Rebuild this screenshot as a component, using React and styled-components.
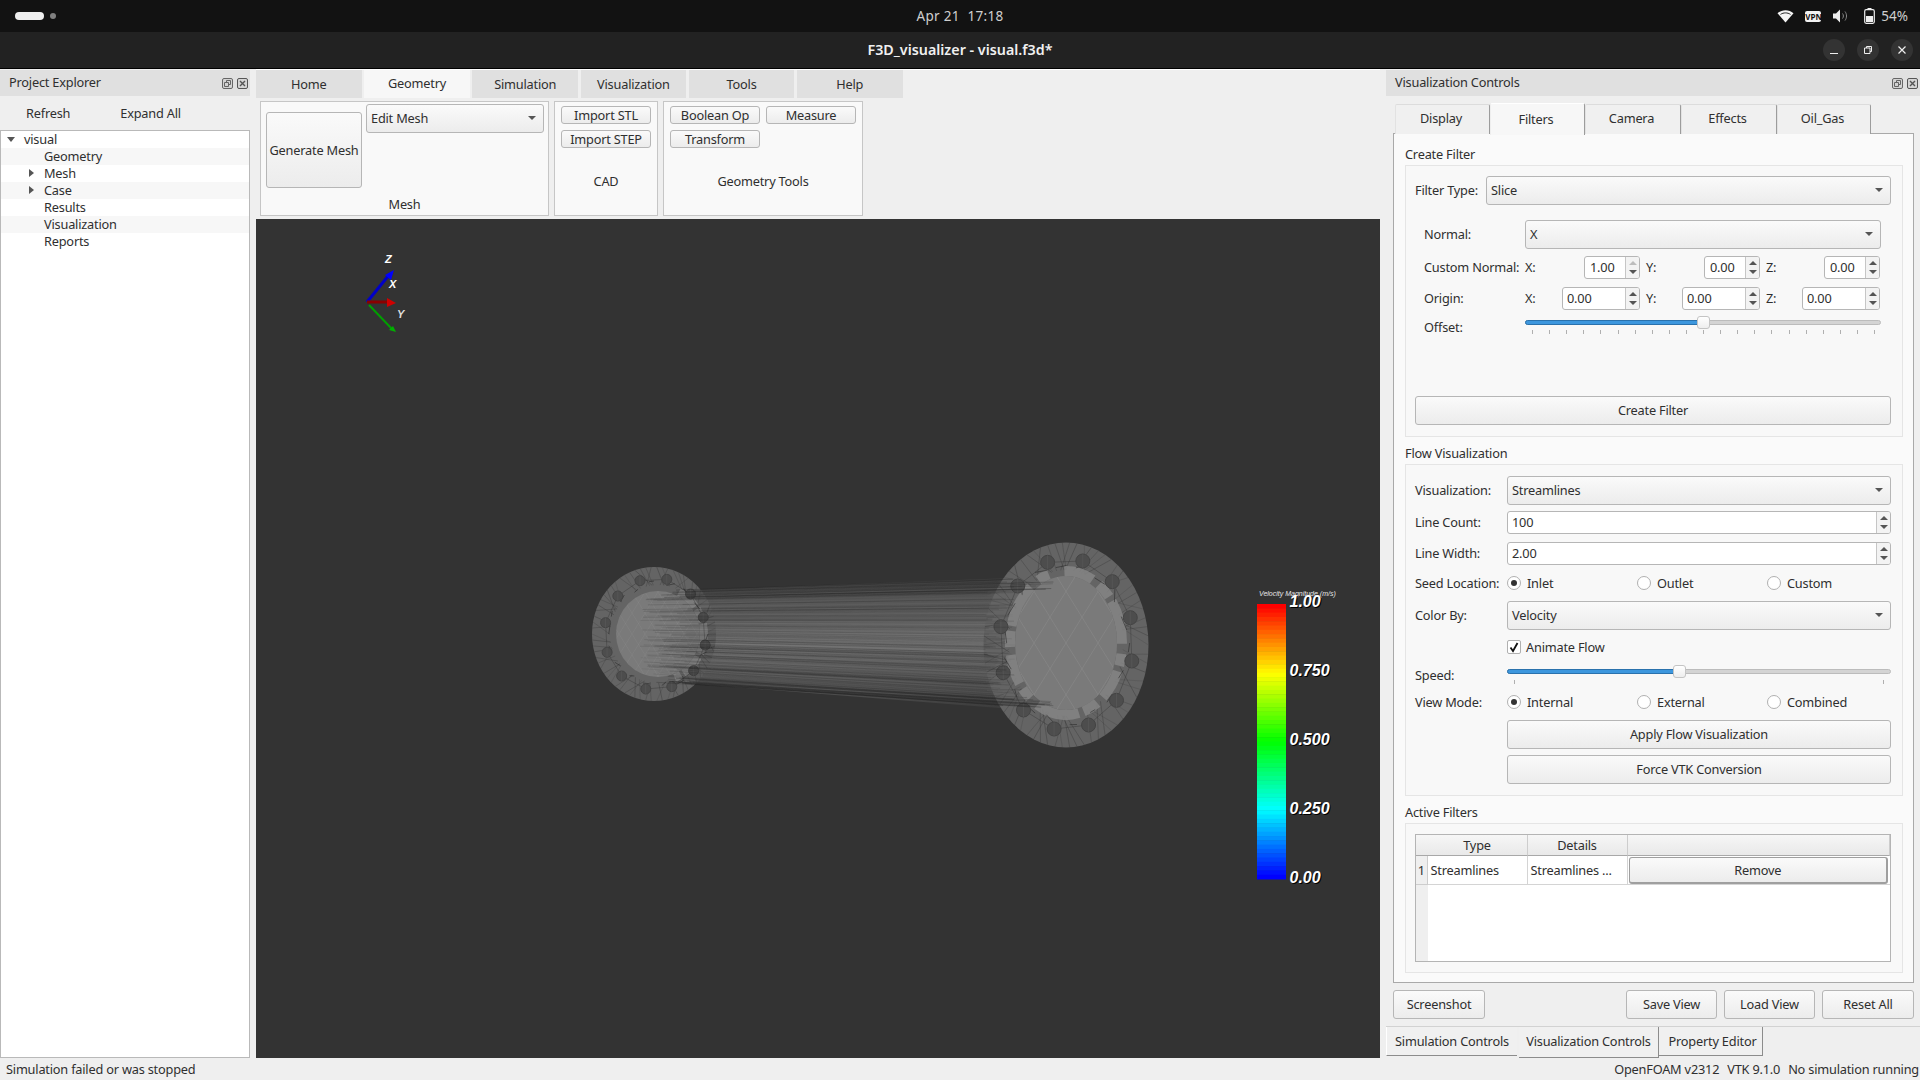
import React from "react";
import styled, { createGlobalStyle } from "styled-components";

const Global = createGlobalStyle`
  html, body { margin: 0; padding: 0; width: 1920px; height: 1080px; overflow: hidden; background: #efefef; }
  body { font-family: "Noto Sans", "Open Sans", sans-serif; font-size: 12.75px; letter-spacing: -.2px; color: #2f2f2f; }
  * { box-sizing: border-box; }
`;

const Shell = styled.div`display:flex;flex-direction:column;width:1920px;height:1080px;`;
const TopBar = styled.header`height:32px;background:#121212;display:grid;grid-template-columns:1fr auto 1fr;align-items:center;color:#cfcfcf;flex:none;`;
const Workspaces = styled.div`display:flex;align-items:center;gap:6px;padding-left:15px;`;
const Pill = styled.span`width:29px;height:8px;border-radius:4px;background:#eeeeee;`;
const Dot = styled.span`width:6px;height:6px;border-radius:50%;background:#808080;`;
const Clock = styled.div`font-size:13.5px;letter-spacing:.3px;white-space:pre;padding-bottom:1px;`;
const Tray = styled.div`display:flex;justify-content:flex-end;align-items:center;padding-right:12px;`;
const TraySlot = styled.span`width:28px;display:flex;justify-content:center;align-items:center;`;
const Vpn = styled.span`width:16px;height:11px;border-radius:2px;background:#f2f2f2;color:#111;font-size:8px;font-weight:700;line-height:11px;text-align:center;letter-spacing:0;`;
const Percent = styled.span`font-size:13.5px;margin-left:-2px;letter-spacing:0;`;
const TitleBar = styled.div`height:37px;background:#222222;border-bottom:1px solid #000;flex:none;position:relative;display:flex;align-items:center;justify-content:center;color:#f0f0f0;font-size:14.3px;letter-spacing:0;font-weight:600;padding-bottom:2px;`;
const WinButtons = styled.div`position:absolute;right:7px;top:7px;display:flex;gap:12px;`;
const WinButton = styled.span`width:22px;height:22px;border-radius:50%;background:#333333;display:flex;align-items:center;justify-content:center;`;

const Main = styled.div`flex:1;display:flex;min-height:0;height:989px;`;
const LeftDock = styled.aside`width:250px;flex:none;display:flex;flex-direction:column;padding-top:1px;`;
const DockHeader = styled.div`height:26px;background:#e0e0e0;display:flex;align-items:center;justify-content:space-between;padding:0 2px 2px 9px;flex:none;`;
const DockIcons = styled.div`display:flex;gap:4px;align-items:center;padding-top:2px;`;
const LinkRow = styled.div`height:34px;display:flex;align-items:center;padding-left:26px;gap:50px;flex:none;`;
const Tree = styled.div`flex:1;background:#fff;border:1px solid #b9b9b9;`;
const TreeRow = styled.div`height:17px;line-height:17px;display:flex;align-items:center;padding-left:${p => p.$depth ? 43 : 23}px;position:relative;background:${p => p.$alt ? "#f7f7f7" : "#fff"};`;
const Arrow = styled.span`position:absolute;left:${p => p.$x}px;top:5px;width:0;height:0;${p => p.$open
  ? "border-left:4px solid transparent;border-right:4px solid transparent;border-top:5px solid #555;top:6px;"
  : "border-top:4px solid transparent;border-bottom:4px solid transparent;border-left:5px solid #555;top:4px;"}`;
const Splitter = styled.div`width:6px;flex:none;position:relative;`;

const Center = styled.section`width:1124px;flex:none;display:flex;flex-direction:column;`;
const RibbonTabs = styled.div`height:29px;flex:none;display:flex;gap:2.5px;border-top:1px solid #fff;`;
const RibbonTab = styled.div`width:105.7px;display:flex;align-items:center;justify-content:center;background:${p => p.$active ? "#f7f7f7" : "#e0e0e0"};padding-bottom:${p => p.$active ? 2 : 0}px;`;
const Ribbon = styled.div`height:121px;flex:none;display:flex;gap:5px;padding:3px 0 3px 4px;`;
const RGroup = styled.div`width:${p => p.$w}px;background:#f9f9f9;border:1px solid #c6c6c6;display:flex;flex-direction:column;`;
const RBody = styled.div`display:flex;padding:${p => p.$pad};gap:${p => p.$gap || 0}px;flex:none;`;
const RLabel = styled.div`flex:1;display:flex;align-items:center;justify-content:center;padding-bottom:2px;`;
const ToolGrid = styled.div`display:grid;grid-template-columns:repeat(${p => p.$cols},90px);grid-auto-rows:18px;gap:6px;`;
const Btn = styled.div`
  height:${p => p.$h || 29}px;width:${p => p.$w ? p.$w + "px" : "auto"};${p => p.$grow ? "flex:1;" : ""}
  margin-top:${p => p.$mt || 0}px;border:1px solid #b6b6b6;border-radius:3px;padding-bottom:${p => p.$h ? 0 : 2}px;
  background:linear-gradient(#fafafa,#ececec);display:flex;align-items:center;justify-content:center;white-space:nowrap;flex-shrink:0;
`;
const Viewport = styled.div`flex:1;background:#333333;overflow:hidden;`;
const Canvas = styled.svg`display:block;`;

const RightDock = styled.aside`width:534px;flex:none;display:flex;flex-direction:column;padding-top:1px;`;
const TabRow = styled.div`height:32px;margin:6px 0 0 9px;display:flex;align-items:flex-end;position:relative;z-index:1;flex:none;`;
const PaneTab = styled.div`width:${p => p.$w}px;height:${p => p.$active ? 32 : 30}px;background:${p => p.$active ? "#f7f7f7" : "#f0f0f0"};
  border-top:1px solid ${p => p.$active ? "#fff" : "#dcdcdc"};border-right:1px solid #9c9c9c;border-left:1px solid ${p => p.$active ? "#eee" : "#e2e2e2"};
  display:flex;align-items:center;justify-content:center;padding:0 3px ${p => p.$active ? 1 : 3}px 0;margin-bottom:${p => p.$active ? -1 : 0}px;border-top-left-radius:2px;border-top-right-radius:2px;`;
const Pane = styled.div`height:850px;margin:-1px 6px 0 7px;background:#fafafa;border:1px solid #a9a9a9;padding:4px 10px 0 11px;flex:none;`;
const Title = styled.div`height:27px;padding-top:8px;line-height:16px;`;
const Group = styled.div`border:1px solid #e5e5e5;background:#f8f8f8;padding:${p => p.$pad};height:${p => p.$h}px;`;
const Row = styled.div`display:flex;align-items:center;height:${p => p.$h || 29}px;margin-top:${p => p.$mt || 0}px;`;
const RowLabel = styled.div`width:${p => p.$w}px;flex:none;white-space:nowrap;`;
const FieldLabel = styled(RowLabel)`padding-bottom:2px;`;
const Sub = styled.div`padding:0 10px 0 9px;`;
const ComboBox = styled.div`${p => p.$w ? `flex:none;width:${p.$w}px;` : "flex:1;"}height:29px;border:1px solid #b6b6b6;border-radius:3px;background:linear-gradient(#fafafa,#ececec);display:flex;align-items:center;justify-content:space-between;padding:0 7px 2px 4px;`;
const Caret = styled.span`width:0;height:0;border-left:4px solid transparent;border-right:4px solid transparent;border-top:4px solid #555;margin-top:1px;`;
const SpinBox = styled.div`width:${p => p.$w ? p.$w + "px" : "auto"};${p => p.$grow ? "flex:1;" : ""}height:23px;background:#fff;border:1px solid #b6b6b6;border-radius:3px;display:flex;align-items:center;justify-content:space-between;padding-left:${p => p.$pl || 4}px;flex-shrink:0;`;
const SpinText = styled.span`padding-bottom:2px;`;
const AxisLabel = styled.span`padding-bottom:2px;`;
const SpinArrows = styled.div`width:14px;height:100%;border-left:1px solid #c6c6c6;background:#f3f3f3;display:flex;flex-direction:column;align-items:center;justify-content:center;gap:5px;border-radius:0 2px 2px 0;`;
const Up = styled.span`width:0;height:0;border-left:4px solid transparent;border-right:4px solid transparent;border-bottom:4px solid ${p => p.$off ? "#bdbdbd" : "#555"};`;
const Down = styled.span`width:0;height:0;border-left:4px solid transparent;border-right:4px solid transparent;border-top:4px solid #555;`;
const Triple = styled.div`flex:1;display:grid;grid-template-columns:115px 114px 114px;column-gap:6px;`;
const SpinCell = styled.div`display:flex;justify-content:space-between;align-items:center;`;
const SliderBox = styled.div`flex:1;position:relative;height:${p => p.$h}px;`;
const Groove = styled.div`position:absolute;left:0;right:0;top:${p => p.$top}px;height:5px;border-radius:3px;background:#d4d4d4;border:1px solid #bcbcbc;`;
const Fill = styled.div`position:absolute;left:0;top:${p => p.$top}px;height:5px;border-radius:3px;background:#3d97de;border:1px solid #2a72ad;`;
const Handle = styled.div`position:absolute;top:${p => p.$top}px;width:13px;height:13px;margin-left:-6px;background:linear-gradient(#fff,#eee);border:1px solid #c4c4c4;border-radius:3px;`;
const Tick = styled.i`position:absolute;top:${p => p.$top}px;width:1px;height:4px;background:#b0b0b0;`;
const RadioSet = styled.div`flex:1;display:grid;grid-template-columns:repeat(3,130px);`;
const RadioItem = styled.div`display:flex;align-items:center;gap:6px;`;
const RadioCircle = styled.span`width:14px;height:14px;border-radius:50%;background:#fff;border:1px solid #b0b0b0;display:flex;align-items:center;justify-content:center;&::after{content:"";width:6px;height:6px;border-radius:50%;background:${p => p.$on ? "#333" : "transparent"};}`;
const CheckBox = styled.span`width:14px;height:14px;background:#fff;border:1px solid #b0b0b0;border-radius:2px;display:flex;align-items:center;justify-content:center;margin-right:5px;`;
const Table = styled.div`height:128px;background:#fff;border:1px solid #b4b4b4;display:grid;grid-template-columns:11.5px 100px 100px 1fr;grid-template-rows:21px 29px 1fr;`;
const HeadCell = styled.div`background:linear-gradient(#f6f6f6,#e9e9e9);border-right:${p => p.$corner ? "none" : "1px solid #cdcdcd"};border-bottom:1px solid #a8a8a8;display:flex;align-items:center;justify-content:center;`;
const RowHead = styled.div`background:#efefef;border-right:1px solid #cdcdcd;border-bottom:1px solid #cdcdcd;display:flex;align-items:center;justify-content:center;`;
const Cell = styled.div`border-right:1px solid #d4d4d4;border-bottom:1px solid #d4d4d4;padding:0 3px;display:flex;align-items:center;white-space:nowrap;overflow:hidden;`;
const ActionCell = styled.div`border-bottom:1px solid #d4d4d4;padding:1px 2px 1px 1px;display:flex;`;
const RemoveBtn = styled(Btn)`height:27px;flex:1;border-color:#9f9f9f;border-width:1px 2px 2px 1px;padding-bottom:0;`;
const EmptyHead = styled.div`background:#efefef;`;
const EmptyBody = styled.div`grid-column:2 / 5;`;
const Actions = styled.div`height:29px;margin:7px 6px 0 7px;display:flex;gap:7px;flex:none;`;
const Spacer = styled.div`flex:1;`;
const DockTabs = styled.div`height:32px;margin-top:7px;border-top:1px solid #d2d2d2;display:flex;flex:none;`;
const DockTab = styled.div`width:${p => p.$w}px;height:${p => p.$h || 29}px;display:flex;align-items:center;justify-content:center;border-bottom:1px solid #8c8c8c;
  border-right:${p => p.$edge ? "1px solid #8c8c8c" : "none"};border-left:${p => p.$first ? "1px solid #fff" : "none"};background:#f0f0f0;margin-right:${p => p.$gap || 0}px;
  padding:0 0 ${p => p.$h ? 2 : 0}px ${p => p.$pl || 0}px;`;
const Status = styled.footer`height:22px;flex:none;display:flex;justify-content:space-between;align-items:center;padding:0 1px 0 6px;background:#efefef;`;
const StatusRight = styled.div`display:flex;gap:8px;`;

function mulberry(a) { return () => { a |= 0; a = a + 0x6D2B79F5 | 0; let t = Math.imul(a ^ a >>> 15, 1 | a); t = t + Math.imul(t ^ t >>> 7, 61 | t) ^ t; return ((t ^ t >>> 14) >>> 0) / 4294967296; }; }

const BOLTS_L = [[183,182],[253,178],[315,222],[348,292],[353,375],[323,452],[266,500],[198,507],[135,468],[97,397],[93,308],[125,228]].map(([x,y]) => [570+x/2.613, 520+y/3]);
const BOLTS_R = [[1248,127],[1340,123],[1417,185],[1464,293],[1468,423],[1428,541],[1355,615],[1265,627],[1185,570],[1132,458],[1126,320],[1170,198]].map(([x,y]) => [570+x/2.613, 520+y/3]);

function Flange({ cx, cy, rx, ry, dcx, dcy, irx, iry, bolts, br, seed, triStep, ringFrom, ringTo, ringW, triOpacity, dash }) {
  const r = mulberry(seed);
  const id = `clip${seed}`;
  const spokes = [];
  for (let i = 0; i < 70; i++) {
    const a = i / 70 * Math.PI * 2, b = a + (r() - .5) * .5;
    spokes.push(<line key={i} x1={cx + Math.cos(a) * rx} y1={cy + Math.sin(a) * ry} x2={dcx + Math.cos(b) * (irx + 6)} y2={dcy + Math.sin(b) * (iry + 6)} stroke="#383838" strokeOpacity={.3 + r() * .4} strokeWidth=".6" />);
  }
  const tris = [];
  for (let i = -8; i <= 8; i++) {
    const d = i * triStep, k = iry * .62;
    tris.push(<line key={`a${i}`} x1={dcx + d - k} y1={dcy - iry} x2={dcx + d + k} y2={dcy + iry} stroke="#949494" strokeOpacity={triOpacity} strokeWidth=".7" />);
    tris.push(<line key={`b${i}`} x1={dcx + d + k} y1={dcy - iry} x2={dcx + d - k} y2={dcy + iry} stroke="#949494" strokeOpacity={triOpacity} strokeWidth=".7" />);
  }
  const cracks = [];
  for (let i = 0; i < 18; i++) {
    const a = i / 18 * Math.PI * 2, s = 1.12 + r() * .14;
    const b = a + .08 + r() * .12, s2 = 1.12 + r() * .14;
    cracks.push(<line key={i} x1={dcx + Math.cos(a) * irx * s} y1={dcy + Math.sin(a) * iry * s} x2={dcx + Math.cos(b) * irx * s2} y2={dcy + Math.sin(b) * iry * s2} stroke="#262626" strokeOpacity=".7" strokeWidth=".8" />);
  }
  const rr = irx + ringW / 2, ry2 = iry + ringW / 2;
  const ringPath = `M${dcx + Math.cos(ringFrom) * rr} ${dcy + Math.sin(ringFrom) * ry2}A${rr} ${ry2} 0 ${ringTo - ringFrom > Math.PI ? 1 : 0} 1 ${dcx + Math.cos(ringTo) * rr} ${dcy + Math.sin(ringTo) * ry2}`;
  return (
    <g>
      <clipPath id={id}><ellipse cx={cx} cy={cy} rx={rx} ry={ry} /></clipPath>
      <ellipse cx={cx} cy={cy} rx={rx} ry={ry} fill="#646464" />
      <g clipPath={`url(#${id})`}>{spokes}</g>
      <path d={ringPath} fill="none" stroke="#878787" strokeWidth={ringW} strokeDasharray={dash} strokeOpacity=".8" />
      <ellipse cx={dcx} cy={dcy} rx={irx} ry={iry} fill="#7a7a7a" />
      <clipPath id={`${id}i`}><ellipse cx={dcx} cy={dcy} rx={irx} ry={iry} /></clipPath>
      <g clipPath={`url(#${id}i)`}>{tris}</g>
      {cracks}
      <path d={`M${bolts.map(b => b.join(" ")).join("L")}Z`} fill="none" stroke="#2c2c2c" strokeOpacity=".45" strokeWidth=".8" />
      {bolts.map(([x, y], i) => <g key={i}><circle cx={x} cy={y} r={br} fill="#4d4d4d" stroke="#444" /><line x1={x} y1={y - br} x2={x} y2={y + br} stroke="#5e5e5e" strokeWidth=".5" /></g>)}
    </g>
  );
}

function PipeMesh() {
  const r = mulberry(77);
  const lines = [];
  for (let i = 0; i < 170; i++) {
    const t = r();
    const edge = Math.abs(t - .5) * 2;
    const strong = edge > .82;
    lines.push(<line key={i} x1={strong ? 656 + r() * 40 : 640 + r() * 50} y1={590 + t * 94} x2={strong ? 995 + r() * 60 : 985 + r() * 30} y2={579 + t * 129} stroke="#232323" strokeOpacity={strong ? .2 + r() * .35 : .08 + r() * .22} strokeWidth={strong || r() > .9 ? .7 : .6} />);
  }
  return (
    <g>
      <defs>
        <linearGradient id="tube" x1="0" y1="0" x2="0" y2="1">
          <stop offset="0" stopColor="#3e3e3e" />
          <stop offset=".14" stopColor="#565656" />
          <stop offset=".5" stopColor="#757575" />
          <stop offset=".86" stopColor="#525252" />
          <stop offset="1" stopColor="#3a3a3a" />
        </linearGradient>
      </defs>
      <polygon points="695,590 1012,578 1012,709 695,684" fill="url(#tube)" />
      <Flange cx={654} cy={634} rx={62} ry={67} dcx={658} dcy={634} irx={42} iry={43} bolts={BOLTS_L} br={5} seed={11} triStep={13} triOpacity=".3" ringFrom={-1.1} ringTo={1.2} ringW={8} dash="22 3 14 2 30 4" />
      <Flange cx={1066} cy={645} rx={82.5} ry={102.5} dcx={1066} dcy={643} irx={51} iry={67} bolts={BOLTS_R} br={7} seed={23} triStep={32} triOpacity=".55" ringFrom={-1.6} ringTo={4.4} ringW={10} dash="30 8 16 5 44 10 12 6" />
      {lines}
    </g>
  );
}

function Triad() {
  const L = { fontFamily: "Liberation Sans, sans-serif", fontSize: 11, fontStyle: "italic", fontWeight: 700, fill: "#fff", letterSpacing: 0 };
  return (
    <g>
      <line x1="367" y1="302" x2="389" y2="275" stroke="#0000c8" strokeWidth="3" />
      <polygon points="394,270 391,280 385,275" fill="#0000ff" />
      <line x1="367" y1="302" x2="388" y2="302" stroke="#8a0000" strokeWidth="3" />
      <polygon points="396,303 387,298 387,307" fill="#d00000" />
      <line x1="369" y1="305" x2="392" y2="329" stroke="#00a000" strokeWidth="2" />
      <polygon points="396,332 389,330 393,326" fill="#00b000" />
      <text x="385" y="263" style={L}>Z</text>
      <text x="389" y="288" style={L}>X</text>
      <text x="397" y="318" style={{ ...L, fill: "#ddd" }}>Y</text>
    </g>
  );
}

function ScalarBar() {
  const n = 64, top = 604, h = 275;
  const V = { fontFamily: "Liberation Sans, sans-serif", fontSize: 16, fontStyle: "italic", fill: "#fff", fontWeight: 700, letterSpacing: 0 };
  const S = { ...V, fill: "#000" };
  const labels = [["1.00", 607], ["0.750", 676], ["0.500", 745], ["0.250", 814], ["0.00", 883]];
  return (
    <g>
      {Array.from({ length: n }, (_, i) => {
        const t = i / (n - 1);
        return <rect key={i} x="1257" y={top + i * h / n} width="29" height={h / n + .5} fill={`hsl(${t * 240},100%,50%)`} />;
      })}
      <text x="1259" y="596" style={{ ...V, fontSize: 7, fontWeight: 400, fill: "#e8e8e8" }}>Velocity Magnitude (m/s)</text>
      {labels.map(([t, y]) => <g key={t}><text x="1290.5" y={y + 1} style={S}>{t}</text><text x="1289.5" y={y} style={V}>{t}</text></g>)}
    </g>
  );
}

const Wifi = () => <svg width="17" height="14" viewBox="0 0 17 14"><path d="M.5 4.200C5 .2 12 .2 16.500 4.200L8.500 13.500Z" fill="#f5f5f5" /><path d="M3.500 5.400c3-2 7-2 10 0" stroke="#222" strokeWidth="1" fill="none" /></svg>;
const Speaker = () => <svg width="16" height="14" viewBox="0 0 16 14"><path d="M0 4.500h3l4-4v13l-4-4H0z" fill="#eee" /><path d="M9.500 4.500c1.200 1.500 1.200 3.500 0 5M12 2.500c2 2.700 2 6.300 0 9" stroke="#888" strokeWidth="1" fill="none" /></svg>;
const Battery = () => <svg width="11" height="16" viewBox="0 0 11 16"><rect x="3.500" y="0" width="4" height="2" fill="#eee" /><rect x=".7" y="1.700" width="9.600" height="13.600" rx="1.500" fill="none" stroke="#eee" strokeWidth="1.200" /><rect x="2" y="8" width="7" height="6" fill="#eee" /></svg>;
const WinIcon = ({ kind }) => (
  <svg width="10" height="10" viewBox="0 0 10 10" fill="none" stroke="#eee" strokeWidth="1">
    {kind === "min" && <path d="M1 8.500h8" />}
    {kind === "max" && <path d="M1.500 3h5.500v5.500H1.500zM3.500 3V1.500H8.500V6.500H7" />}
    {kind === "close" && <path d="M1.500 1.500l7 7M8.500 1.500l-7 7" strokeWidth="1.200" />}
  </svg>
);
const FloatIcon = () => <svg width="11" height="11" viewBox="0 0 11 11" fill="none" stroke="#666"><rect x=".5" y=".5" width="10" height="10" rx="1.500" fill="#d4d4d4" /><path d="M2.500 4.500h4v4h-4zM4.500 4.500v-2h4v4h-2" /></svg>;
const CloseIcon = () => <svg width="11" height="11" viewBox="0 0 11 11" fill="none" stroke="#555"><rect x=".5" y=".5" width="10" height="10" rx="1.500" fill="#d4d4d4" /><path d="M3 3l5 5M8 3l-5 5" strokeWidth="1.400" /></svg>;
const CheckMark = () => <svg width="12" height="12" viewBox="0 0 12 12"><path d="M2.500 6.500l2.500 3.500 4.500-8" stroke="#111" strokeWidth="1.800" fill="none" /></svg>;

const Combo = ({ children, ...p }) => <ComboBox {...p}><span>{children}</span><Caret /></ComboBox>;
const Spin = ({ value, off, ...p }) => <SpinBox {...p}><SpinText>{value}</SpinText><SpinArrows><Up $off={off} /><Down /></SpinArrows></SpinBox>;
const Radio = ({ on, children }) => <RadioItem><RadioCircle $on={on} /><span>{children}</span></RadioItem>;

const TREE = [["visual", 0, 0, "open"], ["Geometry", 1, 1], ["Mesh", 1, 0, "closed"], ["Case", 1, 1, "closed"], ["Results", 1, 0], ["Visualization", 1, 1], ["Reports", 1, 0]];
const OFFSET_TICKS = Array.from({ length: 21 }, (_, i) => i * 17.1 + 7);

export default function App() {
  return (
    <Shell>
      <Global />
      <TopBar>
        <Workspaces><Pill /><Dot /></Workspaces>
        <Clock>Apr 21  17:18</Clock>
        <Tray>
          <TraySlot><Wifi /></TraySlot>
          <TraySlot><Vpn>VPN</Vpn></TraySlot>
          <TraySlot><Speaker /></TraySlot>
          <TraySlot><Battery /></TraySlot>
          <Percent>54%</Percent>
        </Tray>
      </TopBar>
      <TitleBar>
        F3D_visualizer - visual.f3d*
        <WinButtons>
          <WinButton><WinIcon kind="min" /></WinButton>
          <WinButton><WinIcon kind="max" /></WinButton>
          <WinButton><WinIcon kind="close" /></WinButton>
        </WinButtons>
      </TitleBar>
      <Main>
        <LeftDock>
          <DockHeader><span>Project Explorer</span><DockIcons><FloatIcon /><CloseIcon /></DockIcons></DockHeader>
          <LinkRow><span>Refresh</span><span>Expand All</span></LinkRow>
          <Tree>
            {TREE.map(([t, depth, alt, arrow]) => (
              <TreeRow key={t} $depth={depth} $alt={alt}>
                {arrow && <Arrow $x={depth ? 28 : 6} $open={arrow === "open"} />}
                {t}
              </TreeRow>
            ))}
          </Tree>
        </LeftDock>
        <Splitter />
        <Center>
          <RibbonTabs>
            {["Home", "Geometry", "Simulation", "Visualization", "Tools", "Help"].map(t => <RibbonTab key={t} $active={t === "Geometry"}>{t}</RibbonTab>)}
          </RibbonTabs>
          <Ribbon>
            <RGroup $w={289}>
              <RBody $pad="2px 0 6px 5px" $gap={4}>
                <Btn $w={96} $h={76} $mt={8}>Generate Mesh</Btn>
                <Combo $w={178}>Edit Mesh</Combo>
              </RBody>
              <RLabel>Mesh</RLabel>
            </RGroup>
            <RGroup $w={104}>
              <RBody $pad="4px 0 0 6px"><ToolGrid $cols={1}><Btn $h={18}>Import STL</Btn><Btn $h={18}>Import STEP</Btn></ToolGrid></RBody>
              <RLabel>CAD</RLabel>
            </RGroup>
            <RGroup $w={200}>
              <RBody $pad="4px 0 0 6px"><ToolGrid $cols={2}><Btn $h={18}>Boolean Op</Btn><Btn $h={18}>Measure</Btn><Btn $h={18}>Transform</Btn></ToolGrid></RBody>
              <RLabel>Geometry Tools</RLabel>
            </RGroup>
          </Ribbon>
          <Viewport>
            <Canvas width="1124" height="838" viewBox="256 219 1124 838">
              <Triad />
              <PipeMesh />
              <ScalarBar />
            </Canvas>
          </Viewport>
        </Center>
        <Splitter />
        <RightDock>
          <DockHeader><span>Visualization Controls</span><DockIcons><FloatIcon /><CloseIcon /></DockIcons></DockHeader>
          <TabRow>
            <PaneTab $w={95}>Display</PaneTab>
            <PaneTab $w={95} $active>Filters</PaneTab>
            <PaneTab $w={96}>Camera</PaneTab>
            <PaneTab $w={96}>Effects</PaneTab>
            <PaneTab $w={94}>Oil_Gas</PaneTab>
          </TabRow>
          <Pane>
            <Title>Create Filter</Title>
            <Group $pad="10px 11px 0 9px" $h={272}>
              <Row><FieldLabel $w={71}>Filter Type:</FieldLabel><Combo>Slice</Combo></Row>
              <Sub>
                <Row $mt={15}><FieldLabel $w={101}>Normal:</FieldLabel><Combo>X</Combo></Row>
                <Row $mt={7} $h={23}>
                  <FieldLabel $w={101}>Custom Normal:</FieldLabel>
                  <Triple>
                    <SpinCell><AxisLabel>X:</AxisLabel><Spin $w={56} value="1.00" $pl={5} off /></SpinCell>
                    <SpinCell><AxisLabel>Y:</AxisLabel><Spin $w={56} value="0.00" $pl={5} /></SpinCell>
                    <SpinCell><AxisLabel>Z:</AxisLabel><Spin $w={56} value="0.00" $pl={5} /></SpinCell>
                  </Triple>
                </Row>
                <Row $mt={8} $h={23}>
                  <FieldLabel $w={101}>Origin:</FieldLabel>
                  <Triple>
                    <SpinCell><AxisLabel>X:</AxisLabel><Spin $w={78} value="0.00" /></SpinCell>
                    <SpinCell><AxisLabel>Y:</AxisLabel><Spin $w={78} value="0.00" /></SpinCell>
                    <SpinCell><AxisLabel>Z:</AxisLabel><Spin $w={78} value="0.00" /></SpinCell>
                  </Triple>
                </Row>
                <Row $mt={6} $h={24}>
                  <FieldLabel $w={101}>Offset:</FieldLabel>
                  <SliderBox $h={24}>
                    <Groove $top={4} />
                    <Fill $top={4} style={{ width: 178 }} />
                    <Handle $top={0} style={{ left: 178 }} />
                    {OFFSET_TICKS.map(x => <Tick key={x} $top={14} style={{ left: x }} />)}
                  </SliderBox>
                </Row>
              </Sub>
              <Btn $mt={56}>Create Filter</Btn>
            </Group>
            <Title>Flow Visualization</Title>
            <Group $pad="11px 11px 0 9px" $h={332}>
              <Row><FieldLabel $w={92}>Visualization:</FieldLabel><Combo>Streamlines</Combo></Row>
              <Row $mt={6} $h={23}><FieldLabel $w={92}>Line Count:</FieldLabel><Spin $grow value="100" /></Row>
              <Row $mt={8} $h={23}><FieldLabel $w={92}>Line Width:</FieldLabel><Spin $grow value="2.00" /></Row>
              <Row $mt={9} $h={18}>
                <RowLabel $w={92}>Seed Location:</RowLabel>
                <RadioSet><Radio on>Inlet</Radio><Radio>Outlet</Radio><Radio>Custom</Radio></RadioSet>
              </Row>
              <Row $mt={9}><FieldLabel $w={92}>Color By:</FieldLabel><Combo>Velocity</Combo></Row>
              <Row $mt={8} $h={18}><RowLabel $w={92} /><CheckBox><CheckMark /></CheckBox>Animate Flow</Row>
              <Row $mt={4} $h={30}>
                <RowLabel $w={92}>Speed:</RowLabel>
                <SliderBox $h={30}>
                  <Groove $top={9} />
                  <Fill $top={9} style={{ width: 172 }} />
                  <Handle $top={5} style={{ left: 172 }} />
                  <Tick $top={20} style={{ left: 7 }} />
                  <Tick $top={20} style={{ left: 376 }} />
                </SliderBox>
              </Row>
              <Row $mt={3} $h={18}>
                <RowLabel $w={92}>View Mode:</RowLabel>
                <RadioSet><Radio on>Internal</Radio><Radio>External</Radio><Radio>Combined</Radio></RadioSet>
              </Row>
              <Row $mt={9}><RowLabel $w={92} /><Btn $grow>Apply Flow Visualization</Btn></Row>
              <Row $mt={6}><RowLabel $w={92} /><Btn $grow>Force VTK Conversion</Btn></Row>
            </Group>
            <Title>Active Filters</Title>
            <Group $pad="10px 11px 0 9px" $h={150}>
              <Table>
                <HeadCell $corner />
                <HeadCell>Type</HeadCell>
                <HeadCell>Details</HeadCell>
                <HeadCell />
                <RowHead>1</RowHead>
                <Cell>Streamlines</Cell>
                <Cell>Streamlines ...</Cell>
                <ActionCell><RemoveBtn>Remove</RemoveBtn></ActionCell>
                <EmptyHead />
                <EmptyBody />
              </Table>
            </Group>
          </Pane>
          <Actions>
            <Btn $w={92}>Screenshot</Btn>
            <Spacer />
            <Btn $w={91}>Save View</Btn>
            <Btn $w={91}>Load View</Btn>
            <Btn $w={92}>Reset All</Btn>
          </Actions>
          <DockTabs>
            <DockTab $w={131} $first $gap={2}>Simulation Controls</DockTab>
            <DockTab $w={140} $h={31} $edge>Visualization Controls</DockTab>
            <DockTab $w={104} $edge $pl={4}>Property Editor</DockTab>
          </DockTabs>
        </RightDock>
      </Main>
      <Status>
        <span>Simulation failed or was stopped</span>
        <StatusRight><span>OpenFOAM v2312</span><span>VTK 9.1.0</span><span>No simulation running</span></StatusRight>
      </Status>
    </Shell>
  );
}
